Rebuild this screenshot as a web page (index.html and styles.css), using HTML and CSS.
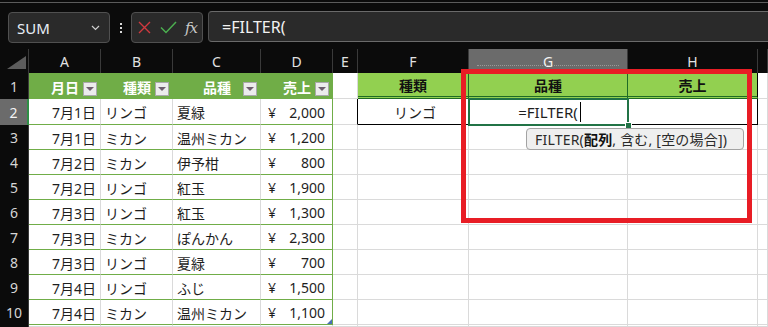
FILE: index.html
```html
<!DOCTYPE html>
<html lang="ja">
<head>
<meta charset="utf-8">
<link rel="stylesheet" href="styles.css">
</head>
<body>
<div class="topbar">
  <div class="namebox"><span>SUM</span>
    <svg class="chev" width="9" height="6" viewBox="0 0 9 6"><path d="M1 1l3.5 3.5L8 1" fill="none" stroke="#cfcfcf" stroke-width="1.2"/></svg>
  </div>
  <div class="vdots"><i></i><i></i><i></i></div>
  <div class="btns">
    <svg width="13" height="13" viewBox="0 0 13 13"><path d="M1 1l11 11M12 1L1 12" stroke="#d0393f" stroke-width="1.4"/></svg>
    <svg width="17" height="13" viewBox="0 0 17 13"><path d="M1 6.5l5 5L16 1" fill="none" stroke="#4caf50" stroke-width="1.5"/></svg>
    <span class="fx">fx</span>
  </div>
  <div class="fbox">=FILTER(</div>
</div>

<div class="sheet">
  <!-- column headers -->
  <div class="corner"><i></i></div>
  <div class="ch">A</div><div class="ch">B</div><div class="ch">C</div><div class="ch">D</div><div class="ch">E</div><div class="ch">F</div><div class="ch sel">G</div><div class="ch">H</div><div class="ch"></div>

  <!-- row 1 -->
  <div class="rh">1</div>
  <div class="th">月日<span class="fb"></span></div>
  <div class="th">種類<span class="fb"></span></div>
  <div class="th">品種<span class="fb"></span></div>
  <div class="th">売上<span class="fb"></span></div>
  <div class="c"></div>
  <div class="th2">種類</div><div class="th2">品種</div><div class="th2 last">売上</div>
  <div class="c"></div>

  <!-- row 2 -->
  <div class="rh sel">2</div>
  <div class="td r">7月1日</div><div class="td">リンゴ</div><div class="td">夏緑</div><div class="td m"><span>¥</span><span>2,000</span></div>
  <div class="c ebox"></div>
  <div class="rt ctr">リンゴ</div><div class="rt"></div><div class="rt last"></div>
  <div class="c"></div>

  <!-- row 3 -->
  <div class="rh">3</div>
  <div class="td r">7月1日</div><div class="td">ミカン</div><div class="td">温州ミカン</div><div class="td m"><span>¥</span><span>1,200</span></div>
  <div class="c"></div><div class="c"></div><div class="c"></div><div class="c"></div><div class="c"></div>

  <!-- row 4 -->
  <div class="rh">4</div>
  <div class="td r">7月2日</div><div class="td">ミカン</div><div class="td">伊予柑</div><div class="td m"><span>¥</span><span>800</span></div>
  <div class="c"></div><div class="c"></div><div class="c"></div><div class="c"></div><div class="c"></div>

  <!-- row 5 -->
  <div class="rh">5</div>
  <div class="td r">7月2日</div><div class="td">リンゴ</div><div class="td">紅玉</div><div class="td m"><span>¥</span><span>1,900</span></div>
  <div class="c"></div><div class="c"></div><div class="c"></div><div class="c"></div><div class="c"></div>

  <!-- row 6 -->
  <div class="rh">6</div>
  <div class="td r">7月3日</div><div class="td">リンゴ</div><div class="td">紅玉</div><div class="td m"><span>¥</span><span>1,300</span></div>
  <div class="c"></div><div class="c"></div><div class="c"></div><div class="c"></div><div class="c"></div>

  <!-- row 7 -->
  <div class="rh">7</div>
  <div class="td r">7月3日</div><div class="td">ミカン</div><div class="td">ぽんかん</div><div class="td m"><span>¥</span><span>2,300</span></div>
  <div class="c"></div><div class="c"></div><div class="c"></div><div class="c"></div><div class="c"></div>

  <!-- row 8 -->
  <div class="rh">8</div>
  <div class="td r">7月3日</div><div class="td">リンゴ</div><div class="td">夏緑</div><div class="td m"><span>¥</span><span>700</span></div>
  <div class="c"></div><div class="c"></div><div class="c"></div><div class="c"></div><div class="c"></div>

  <!-- row 9 -->
  <div class="rh">9</div>
  <div class="td r">7月4日</div><div class="td">リンゴ</div><div class="td">ふじ</div><div class="td m"><span>¥</span><span>1,500</span></div>
  <div class="c"></div><div class="c"></div><div class="c"></div><div class="c"></div><div class="c"></div>

  <!-- row 10 -->
  <div class="rh">10</div>
  <div class="td r">7月4日</div><div class="td">ミカン</div><div class="td">温州ミカン</div><div class="td m endcell"><span>¥</span><span>1,100</span><i class="resize"></i></div>
  <div class="c"></div><div class="c"></div><div class="c"></div><div class="c"></div><div class="c"></div>

  <!-- row 11 -->
  <div class="rh"></div>
  <div class="c"></div><div class="c"></div><div class="c"></div><div class="c"></div><div class="c"></div><div class="c"></div><div class="c"></div><div class="c"></div><div class="c"></div>
</div>

<div class="active"><span class="edit">=FILTER(</span><span class="caret"></span></div>
<div class="handle"></div>
<div class="redbox"></div>
<div class="tip">FILTER(<b>配列</b>, 含む, [空の場合])</div>
</body>
</html>
```

FILE: styles.css
```css
* { box-sizing: border-box; margin: 0; padding: 0; }

body {
  position: relative;
  width: 768px;
  height: 327px;
  overflow: hidden;
  background: #0b0b0b;
  font-family: "Noto Sans", "Noto Sans CJK JP", sans-serif;
}

/* ---------- formula bar ---------- */
.topbar {
  margin-top: 2px;
  height: 47px;
  border-top: 1px solid #5b5b5b;
  display: flex;
  align-items: flex-start;
  padding: 9px 0 0 8px;
}

.namebox {
  width: 102px;
  height: 31px;
  background: #2a2a2a;
  border: 1px solid #505050;
  border-radius: 4px;
  display: flex;
  align-items: center;
  justify-content: space-between;
  padding: 0 9px 0 8px;
  color: #e8eef6;
  font-size: 15px;
}
.namebox .chev { margin-top: 1px; }

.vdots {
  width: 21px;
  height: 31px;
  display: flex;
  flex-direction: column;
  align-items: center;
  justify-content: center;
  gap: 2px;
}
.vdots i {
  display: block;
  width: 2px;
  height: 2px;
  background: #d8d8d8;
}

.btns {
  width: 72px;
  height: 31px;
  background: #2a2a2a;
  border: 1px solid #505050;
  border-radius: 4px;
  display: flex;
  align-items: center;
  padding: 0 0 0 6px;
  gap: 9px;
}
.btns .fx {
  font-family: "DejaVu Serif", "Liberation Serif", serif;
  font-style: italic;
  font-size: 15px;
  color: #c8c8c8;
  margin-left: -1px;
  letter-spacing: -1px;
}

.fbox {
  flex: 1;
  margin-left: 5px;
  margin-top: -1px;
  height: 31px;
  background: #2a2a2a;
  border-top: 1px solid #6a6a6a;
  border-bottom: 1px solid #6a6a6a;
  border-left: 1px solid #505050;
  border-radius: 4px 0 0 4px;
  color: #f2f2f2;
  font-size: 16px;
  display: flex;
  align-items: center;
  padding-left: 13px;
}

/* ---------- sheet grid ---------- */
.sheet {
  display: grid;
  grid-template-columns: 29px 72px 72px 88px 72px 25px 111px 159px 130px 1fr;
  grid-template-rows: 24px 26px 26px repeat(8, 25px) 1fr;
  height: 278px;
  background: #fff;
}

.corner {
  background: #0b0b0b;
  border-right: 1px solid #3a3a3a;
  display: flex;
  justify-content: flex-end;
  align-items: flex-end;
  padding: 0 2px 4px 0;
}
.corner i {
  display: block;
  width: 19px;
  height: 13px;
  background: #5c5c5c;
  clip-path: polygon(100% 0, 100% 100%, 0 100%);
}

.ch {
  background: #0b0b0b;
  color: #e2e2e2;
  border-right: 1px solid #3a3a3a;
  font-size: 14px;
  display: flex;
  align-items: center;
  justify-content: center;
  padding-top: 1px;
}
.ch.sel {
  position: relative;
  background: #6b6b6b;
  color: #f4f4f4;
}
.ch.sel::after {
  content: "";
  position: absolute;
  left: 8px;
  right: 8px;
  top: 16px;
  border-top: 1px dotted #9a9a9a;
}

.rh {
  background: #0b0b0b;
  color: #d6d6d6;
  border-right: 1px solid #3a3a3a;
  font-size: 14px;
  display: flex;
  align-items: center;
  justify-content: center;
}
.rh.sel {
  background: #6b6b6b;
  color: #f4f4f4;
  border-right: 2px solid #2f8f46;
}

.c {
  background: #fff;
  border-right: 1px solid #dadada;
  border-bottom: 1px solid #dadada;
}
.c.ebox { border-right-color: #000; }

/* left table */
.th {
  position: relative;
  background: #70ad47;
  color: #fff;
  font-weight: bold;
  font-size: 14px;
  display: flex;
  align-items: center;
  justify-content: center;
  padding-top: 1px;
}
.fb {
  position: absolute;
  right: 4px;
  top: 9px;
  width: 14px;
  height: 14px;
  background: #ececec;
  border: 1px solid #a9a9a9;
}
.fb::after {
  content: "";
  position: absolute;
  left: 2px;
  top: 4px;
  border-top: 4px solid #6d5e6d;
  border-left: 4px solid transparent;
  border-right: 4px solid transparent;
}

.td {
  background: #fff;
  color: #1e1e1e;
  font-size: 14px;
  border-right: 1px solid #dadada;
  border-bottom: 1px solid #70ad47;
  display: flex;
  align-items: center;
  padding: 1px 4px 0 4px;
  white-space: nowrap;
}
.td.r { justify-content: flex-end; padding-right: 4px; }
.td.m {
  justify-content: space-between;
  padding: 1px 7px 0 7px;
  border-right-color: #70ad47;
}
.endcell { position: relative; }
.resize {
  position: absolute;
  right: 0;
  bottom: 0;
  width: 5px;
  height: 5px;
  background: #4a6fb5;
  clip-path: polygon(100% 0, 100% 100%, 0 100%);
}

/* right table */
.th2 {
  background: #92d050;
  color: #111;
  font-weight: bold;
  font-size: 14px;
  border-right: 1px solid #1f6b25;
  border-bottom: 3px double #1f6b25;
  display: flex;
  align-items: center;
  justify-content: center;
  padding-top: 1px;
}
.th2.last, .rt.last { border-right-color: #000; }

.rt {
  background: #fff;
  color: #1e1e1e;
  font-size: 14px;
  border-right: 1px solid #000;
  border-bottom: 1px solid #000;
  display: flex;
  align-items: center;
  padding-top: 1px;
}
.rt.ctr { justify-content: center; padding-left: 4px; }

/* ---------- overlays ---------- */
.active {
  position: absolute;
  left: 468px;
  top: 98px;
  width: 161px;
  height: 28px;
  border: 2px solid #217346;
  background: #fff;
  display: flex;
  align-items: center;
  justify-content: center;
  padding-left: 2px;
  color: #1e1e1e;
  font-size: 15px;
}
.caret {
  display: block;
  width: 1px;
  height: 20px;
  background: #000;
  margin-left: 2px;
}

.handle {
  position: absolute;
  left: 625px;
  top: 122px;
  width: 7px;
  height: 7px;
  background: #217346;
  border: 1px solid #fff;
}

.redbox {
  position: absolute;
  left: 461px;
  top: 69px;
  width: 291px;
  height: 154px;
  border: 5px solid #e81d25;
}

.tip {
  position: absolute;
  left: 526px;
  top: 128px;
  width: 218px;
  height: 22px;
  background: #efefef;
  border: 1px solid #a3a3a3;
  border-radius: 4px;
  color: #2a2a2a;
  font-size: 14px;
  letter-spacing: 0.2px;
  display: flex;
  align-items: center;
  padding-left: 8px;
  white-space: nowrap;
  overflow: hidden;
}
.tip b { font-weight: bold; color: #111; }
```
